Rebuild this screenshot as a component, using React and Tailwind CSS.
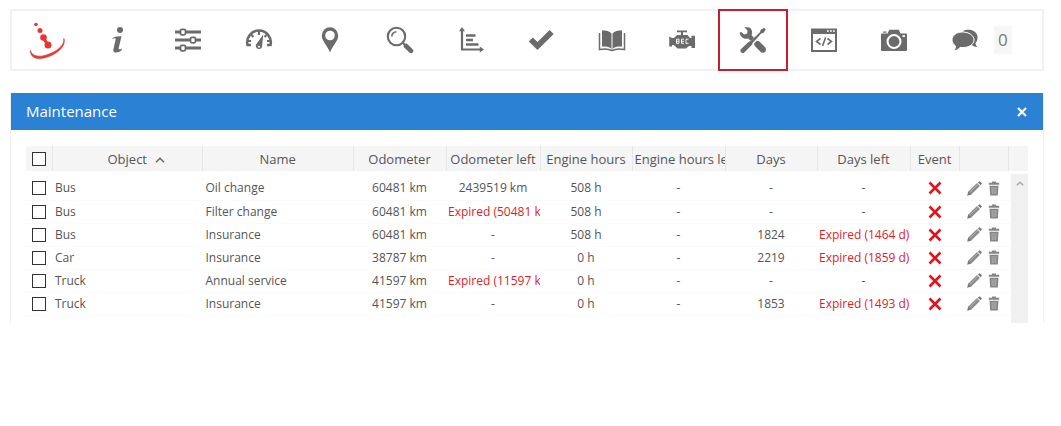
import React, { useState } from 'react';

const Icon = ({ children }) => (
  <svg viewBox="0 0 28 28" className="w-7 h-7" fill="currentColor" aria-hidden="true">
    {children}
  </svg>
);

const LogoIcon = () => (
  <svg viewBox="0 0 40 40" className="w-10 h-10 text-[#e8362f]" fill="currentColor" aria-hidden="true">
    <circle cx="9" cy="4.5" r="1.8" />
    <circle cx="13" cy="10.5" r="2.5" />
    <circle cx="16.5" cy="17.5" r="3.3" />
    <circle cx="21" cy="25" r="3.5" />
    <path d="M16.500 18l4.500 7" stroke="currentColor" strokeWidth="3" />
    <path d="M3.500 30.500C4.500 36 12 38 21 34.500C32 30.500 38 24 36.800 18.500C39 25 33 32 22 36.500C12 40.500 3 38.500 3.500 30.500Z" stroke="currentColor" strokeWidth=".7" />
  </svg>
);

const InfoIcon = () => (
  <Icon>
    <circle cx="16" cy="4" r="3" />
    <path d="M8.500 12.500C10 10.800 13 10 17.500 10.200L14.700 22C14.400 23.700 16 23.600 18 22.400L17.600 24.200C15.500 26 12.500 27 10.400 26.200C8.800 25.500 9.300 23.700 9.700 22L11.700 13.300C11.900 12 10 12 8.200 13.200Z" />
  </Icon>
);

const SlidersIcon = () => (
  <Icon>
    <path d="M1 4.500h26v3H1zM1 12.500h26v3H1zM1 20.500h26v3H1z" />
    <g fill="#fff" stroke="currentColor" strokeWidth="1.800">
      <rect x="6.500" y="3.300" width="5" height="5.500" rx="1.500" />
      <rect x="16.500" y="11.300" width="5" height="5.500" rx="1.500" />
      <rect x="6.500" y="19.300" width="5" height="5.500" rx="1.500" />
    </g>
  </Icon>
);

const GaugeIcon = () => (
  <Icon>
    <path d="M6 19H2.500A11.800 11.800 0 1 1 25.500 19H22" fill="none" stroke="currentColor" strokeWidth="2.600" />
    <path d="M14 5v4M6 8.500l2.500 2.500M22 8.500L19.500 11M3 15h3M25 15h-3" stroke="currentColor" strokeWidth="2" />
    <path d="M18.300 8.500L17 21a3.200 3.200 0 1 1-5.600-3Z" />
    <circle cx="14" cy="20.800" r="1" fill="#fff" />
  </Icon>
);

const PinIcon = () => (
  <Icon>
    <path fillRule="evenodd" d="M14 1.300a8.200 8.200 0 0 0-8.200 8.200C5.800 15 11 19 14 26.500 17 19 22.200 15 22.200 9.500A8.200 8.200 0 0 0 14 1.300ZM14 4.700a4.800 4.800 0 1 1 0 9.600 4.800 4.800 0 0 1 0-9.600Z" />
  </Icon>
);

const SearchIcon = () => (
  <Icon>
    <circle cx="10.500" cy="10.500" r="8.700" fill="none" stroke="currentColor" strokeWidth="2.100" />
    <path d="M5.800 10.500a4.700 4.700 0 0 1 4.700-4.700" fill="none" stroke="currentColor" strokeWidth="1.600" />
    <path d="M17 17l3 3" stroke="currentColor" strokeWidth="2" />
    <path d="M20 20l5 4.800" stroke="currentColor" strokeWidth="4.600" strokeLinecap="round" />
  </Icon>
);

const ChartIcon = () => (
  <Icon>
    <path d="M5 4v19.500h20" fill="none" stroke="currentColor" strokeWidth="2.200" />
    <path d="M5 1l3 4.200H2ZM27 23.500L22.800 26.500v-6Z" />
    <path d="M9 9.500h9.500M9 14h7M9 18.500h12.500" stroke="currentColor" strokeWidth="2.600" />
  </Icon>
);

const CheckIcon = () => (
  <Icon>
    <path d="M1.800 15.500L5.800 11.500L10.500 16L22.600 4L26.700 8L10.500 24Z" />
  </Icon>
);

const BookIcon = () => (
  <Icon>
    <path d="M4 4.500C8 4.500 11.500 5 13.500 7.500V23C11 20.500 8 20.500 4 20.500ZM24 4.500C20 4.500 16.500 5 14.500 7.500V23C17 20.500 20 20.500 24 20.500Z" />
    <path d="M1.500 7v16.500c4.500-1 8.500-1 12.500 1 4-2 8-2 12.500-1V7" fill="none" stroke="currentColor" strokeWidth="1.500" />
  </Icon>
);

const EngineIcon = () => (
  <Icon>
    <path d="M9 4.500h10v1.700h-4V9h4.500l2.500 3h1.500V9.800H27V22h-3.500v-2H21l-3 2.500H9.500L6 19H4v1.500H1.200V10.500L4 12h2l3-3h4V6.200H9Z" />
    <path d="M8.500 13.200h2.500v4.200h-2.500M8.500 15.300h2.500M8.500 13.200v4.200M16 13.200h-2.500v4.200h2.500M13.500 15.300h2.500M20.500 13.200H18v4.200h2.500" fill="none" stroke="#fff" strokeWidth=".9" />
  </Icon>
);

const ToolsIcon = () => (
  <Icon>
    <path d="M5.500 1L10.500 1.500C13.500 3.500 13.500 7 12.500 9L15 12L12 15L9 12.500C5 13.800 1 10.500 .7 6.500L2.200 6L5.200 8.400L8.200 7.500L8.500 4.800Z" />
    <path d="M26.700 3.500L25 1.800L21.500 4L21.200 6L11.500 15.200L10 15.500L1.800 23.300C.5 26 3 28 5.300 26.500L13.200 18.500L13.500 17L22.500 7.300L24.500 7Z" />
    <path d="M15 17.500L17.800 14.800L20.200 15.200L26.300 21.500C28.500 25 25 28 22 26.200L15.800 20Z" />
  </Icon>
);

const CodeIcon = () => (
  <Icon>
    <path fillRule="evenodd" d="M1 2.500h26V26H1ZM3 8v16h22V8Z" />
    <path d="M17 5h1.800M20 5h1.800M23 5h1.800" stroke="#fff" strokeWidth="1.300" />
    <path d="M10.500 12.500L6.500 15.500L10.500 18.500M17.500 12.500L21.500 15.500L17.500 18.500M15.600 11.500L12.500 20" fill="none" stroke="currentColor" strokeWidth="1.600" />
  </Icon>
);

const CameraIcon = () => (
  <Icon>
    <path fillRule="evenodd" d="M2 7.500h5.500L9.300 3.700h9.500L20.500 7.500H26q1 0 1 1V24q0 1-1 1H2q-1 0-1-1V8.500q0-1 1-1ZM14 8a7.500 7.500 0 1 0 0 15 7.500 7.500 0 0 0 0-15Z" />
    <circle cx="14" cy="15.500" r="5.400" />
    <path d="M3 5.500h3.500v1.200H3z" />
    <path d="M22.500 9.200h2.500v1.800h-2.500z" fill="#fff" />
  </Icon>
);

const ChatIcon = () => (
  <Icon>
    <path d="M12 5C16 2.500 25 3.500 26.500 10C27 13.500 25.500 16 24.500 17C24.500 19 25.500 20 26.500 21C23.500 21 22 20 21 19L17 20Z" />
    <path d="M11.500 6C5.500 6 1 9.500 1 14C1 16.500 2.500 18.500 4.500 20C4.500 22 3.800 23.500 2.800 25C6 24.500 8 23 9 21.400C17 22.500 23 18.500 23 14C23 9.500 18 6 11.500 6Z" stroke="#fff" strokeWidth="1" />
  </Icon>
);

const PencilIcon = () => (
  <svg viewBox="0 0 15 15" className="w-[15px] h-[15px]" aria-hidden="true">
    <path d="M2.800 12L11.500 3.500" stroke="#8c8c8c" strokeWidth="4.200" />
    <path d="M.2 14.800L1.200 10.300L4.600 13.600Z" fill="#777" />
    <path d="M10.800 1.500L12.700 .2L14.900 2.200L13.600 4.200Z" fill="#777" />
    <path d="M3 11L11 3.200" stroke="#b5b5b5" strokeWidth=".9" />
  </svg>
);

const TrashIcon = () => (
  <svg viewBox="0 0 12 15" className="w-3 h-[15px]" aria-hidden="true">
    <path d="M4 .5h4v1.300h3.200v2H.8v-2H4ZM1.500 4.800h9L9.800 14.500H2.200Z" fill="#858585" />
    <path d="M4 6l.3 7M6 6v7M8 6l-.3 7" stroke="#c4c4c4" strokeWidth=".7" />
  </svg>
);

const CrossIcon = () => (
  <svg viewBox="0 0 14 14" className="w-3.5 h-3.5 mx-auto" role="img" aria-label="No event">
    <path d="M1.500 1.500l11 11M12.500 1.500l-11 11" stroke="#e0141c" strokeWidth="2.600" />
  </svg>
);

const menu = [
  { name: 'About', icon: LogoIcon },
  { name: 'Info', icon: InfoIcon },
  { name: 'Settings', icon: SlidersIcon },
  { name: 'Dashboard', icon: GaugeIcon },
  { name: 'Show point', icon: PinIcon },
  { name: 'Address search', icon: SearchIcon },
  { name: 'Reports', icon: ChartIcon },
  { name: 'Tasks', icon: CheckIcon },
  { name: 'Logbook', icon: BookIcon },
  { name: 'Diagnostics', icon: EngineIcon },
  { name: 'Maintenance', icon: ToolsIcon },
  { name: 'Object control', icon: CodeIcon },
  { name: 'Image gallery', icon: CameraIcon },
  { name: 'Chat', icon: ChatIcon },
];

const services = [
  { id: 1, object: 'Bus', name: 'Oil change', odometer: '60481 km', odometerLeft: '2439519 km', hours: '508 h', hoursLeft: '-', days: '-', daysLeft: '-' },
  { id: 2, object: 'Bus', name: 'Filter change', odometer: '60481 km', odometerLeft: 'Expired (50481 km)', hours: '508 h', hoursLeft: '-', days: '-', daysLeft: '-' },
  { id: 3, object: 'Bus', name: 'Insurance', odometer: '60481 km', odometerLeft: '-', hours: '508 h', hoursLeft: '-', days: '1824', daysLeft: 'Expired (1464 d)' },
  { id: 4, object: 'Car', name: 'Insurance', odometer: '38787 km', odometerLeft: '-', hours: '0 h', hoursLeft: '-', days: '2219', daysLeft: 'Expired (1859 d)' },
  { id: 5, object: 'Truck', name: 'Annual service', odometer: '41597 km', odometerLeft: 'Expired (11597 km)', hours: '0 h', hoursLeft: '-', days: '-', daysLeft: '-' },
  { id: 6, object: 'Truck', name: 'Insurance', odometer: '41597 km', odometerLeft: '-', hours: '0 h', hoursLeft: '-', days: '1853', daysLeft: 'Expired (1493 d)' },
];

const Checkbox = ({ label, checked, onChange }) => (
  <input
    type="checkbox"
    aria-label={label}
    checked={checked}
    onChange={onChange}
    className="appearance-none block w-3.5 h-3.5 mx-auto border border-[#333] bg-white checked:bg-[#2b82d4]"
  />
);

const HeaderCell = ({ children }) => (
  <th scope="col" className="px-0.5 font-normal whitespace-nowrap overflow-hidden border-l border-[#e6e6e6]">
    {children}
  </th>
);

const Cell = ({ value }) => (
  <td className={value.startsWith('Expired') ? 'px-0.5 text-center whitespace-nowrap overflow-hidden text-[#dc1e28]' : 'px-0.5 text-center whitespace-nowrap overflow-hidden'}>
    {value}
  </td>
);

const Toolbar = () => {
  const [active, setActive] = useState('Maintenance');

  return (
    <nav className="flex h-[62px] border-2 border-[#f1f1f1]">
      {menu.map(({ name, icon: MenuIcon }) => (
        <button
          key={name}
          aria-label={name}
          onClick={() => setActive(name)}
          className={active === name
            ? 'flex-1 -my-0.5 flex items-center justify-center text-[#6b6b6b] border-2 border-[#c4202f]'
            : 'flex-1 -my-0.5 flex items-center justify-center text-[#6b6b6b] border-2 border-transparent'}
        >
          <MenuIcon />
        </button>
      ))}
      <div className="w-[42px] flex items-center">
        <span className="-ml-1.5 px-1 py-0.5 bg-[#f7f7f7] text-[17px] leading-6 text-[#777]">0</span>
      </div>
    </nav>
  );
};

const App = () => {
  const [selected, setSelected] = useState([]);

  const toggle = (id) => {
    setSelected(selected.includes(id) ? selected.filter(item => item !== id) : [...selected, id]);
  };

  const toggleAll = () => {
    setSelected(selected.length === services.length ? [] : services.map(service => service.id));
  };

  return (
    <div className="min-h-screen bg-white pt-[9px] pl-2.5 pr-[17px] font-['Open_Sans',sans-serif] text-[#555]">
      <Toolbar />
      <section className="mt-[22px] border-x border-[#eee]">
        <header className="flex items-center justify-between h-[37px] px-[15px] bg-[#2b82d4] text-white">
          <h1 className="text-[15px]">Maintenance</h1>
          <button aria-label="Close" className="pr-px">
            <svg viewBox="0 0 10 10" className="w-2.5 h-2.5" aria-hidden="true">
              <path d="M1 1l8 8M9 1L1 9" stroke="currentColor" strokeWidth="2.200" />
            </svg>
          </button>
        </header>
        <div className="relative mx-[15px] mt-4 pb-[7px]">
          <table className="w-full table-fixed text-xs leading-4">
            <colgroup>
              <col className="w-[26px]" />
              <col />
              <col />
              <col className="w-[93px]" />
              <col className="w-[94px]" />
              <col className="w-[92px]" />
              <col className="w-[93px]" />
              <col className="w-[92px]" />
              <col className="w-[93px]" />
              <col className="w-[49px]" />
              <col className="w-[49px]" />
              <col className="w-5" />
            </colgroup>
            <thead>
              <tr className="h-[25px] bg-[#f5f5f5] text-[13px]">
                <th scope="col">
                  <Checkbox label="Select all" checked={selected.length === services.length} onChange={toggleAll} />
                </th>
                <HeaderCell>
                  <span className="relative">
                    Object
                    <svg viewBox="0 0 10 6" className="absolute left-full top-1/2 -mt-0.5 ml-2 w-2.5 h-1.5" aria-hidden="true">
                      <path d="M1 5.200L5 1.200L9 5.200" fill="none" stroke="#666" strokeWidth="1.500" />
                    </svg>
                  </span>
                </HeaderCell>
                <HeaderCell>Name</HeaderCell>
                <HeaderCell>Odometer</HeaderCell>
                <HeaderCell>Odometer left</HeaderCell>
                <HeaderCell>Engine hours</HeaderCell>
                <HeaderCell>Engine hours left</HeaderCell>
                <HeaderCell>Days</HeaderCell>
                <HeaderCell>Days left</HeaderCell>
                <HeaderCell>Event</HeaderCell>
                <HeaderCell />
                <HeaderCell />
              </tr>
            </thead>
            <tbody className="before:block before:h-1.5">
              {services.map(service => (
                <tr key={service.id} className="h-[23px] border-b border-[#fafafa]">
                  <td>
                    <Checkbox
                      label={`Select ${service.object} ${service.name}`}
                      checked={selected.includes(service.id)}
                      onChange={() => toggle(service.id)}
                    />
                  </td>
                  <td className="px-[3px]">{service.object}</td>
                  <td className="px-[3px]">{service.name}</td>
                  <Cell value={service.odometer} />
                  <Cell value={service.odometerLeft} />
                  <Cell value={service.hours} />
                  <Cell value={service.hoursLeft} />
                  <Cell value={service.days} />
                  <Cell value={service.daysLeft} />
                  <td><CrossIcon /></td>
                  <td>
                    <div className="flex items-center justify-center gap-1.5">
                      <button aria-label="Edit"><PencilIcon /></button>
                      <button aria-label="Delete"><TrashIcon /></button>
                    </div>
                  </td>
                  <td />
                </tr>
              ))}
            </tbody>
          </table>
          <div className="absolute right-0 top-7 bottom-0 w-[17px] bg-[#f0f0f0] flex justify-center pt-[7px]">
            <svg viewBox="0 0 8 5" className="w-2 h-[5px]" aria-hidden="true">
              <path d="M.8 4.300L4 1.200L7.200 4.300" fill="none" stroke="#aaa" strokeWidth="1.500" />
            </svg>
          </div>
        </div>
      </section>
    </div>
  );
};

export default App;
